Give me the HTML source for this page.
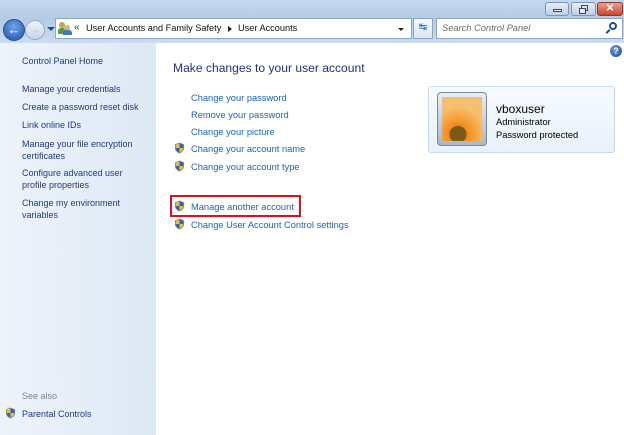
<!DOCTYPE html>
<html><head><meta charset="utf-8"><style>
*{margin:0;padding:0;box-sizing:border-box}
body{width:624px;height:435px;overflow:hidden;position:relative;font-family:"Liberation Sans",sans-serif;font-size:9.3px;background:#fff}
.a{position:absolute;white-space:nowrap}
.top{position:absolute;left:0;top:0;width:624px;height:43px;background:linear-gradient(#c4d8ee,#b3cbe6 45%,#c9dcf0)}
.left{position:absolute;left:0;top:43px;width:156px;height:392px;background:linear-gradient(90deg,#eef3fa,#dde8f5)}
.lk{color:#1e3a8a;font-size:9px}
.ml{color:#1a63c5;font-size:9.3px}
.sh{position:absolute;width:11px;height:12px}
</style></head><body>
<div class="top"></div>
<div class="a" style="left:545px;top:2px;width:24px;height:14px;border:1px solid #7d95b4;border-radius:3px;background:linear-gradient(#e4eef9,#bcd0e8)"><div style="position:absolute;left:7px;top:6px;width:9px;height:3px;border:1px solid #445;background:#fff"></div></div>
<div class="a" style="left:571px;top:2px;width:25px;height:14px;border:1px solid #7d95b4;border-radius:3px;background:linear-gradient(#e4eef9,#bcd0e8)"><div style="position:absolute;left:9px;top:2px;width:7px;height:6px;border:1px solid #445"></div><div style="position:absolute;left:7px;top:5px;width:7px;height:6px;border:1px solid #445;background:#e0eaf6"></div></div>
<div class="a" style="left:597px;top:2px;width:26px;height:14px;border:1px solid #8a3a2e;border-radius:3px;background:linear-gradient(#eaa08f,#c8462f);color:#fff;font-weight:bold;font-size:10px;text-align:center;line-height:12px">✕</div>
<div class="a" style="left:3px;top:19px;width:22px;height:22px;border-radius:50%;background:radial-gradient(circle at 50% 35%,#6fa6ea,#1b4fa8);border:1px solid #274f8f;color:#fff;font-weight:bold;font-size:13px;text-align:center;line-height:19px">←</div>
<div class="a" style="left:25px;top:20px;width:20px;height:20px;border-radius:50%;background:linear-gradient(#eef3f9,#c8d6e6);border:1px solid #9aaec6;color:#bcc9d8;font-size:12px;text-align:center;line-height:17px">→</div>
<div class="a" style="left:47px;top:27px;width:0;height:0;border-left:4px solid transparent;border-right:4px solid transparent;border-top:4px solid #1c4a8c"></div>
<div class="a" style="left:55px;top:18px;width:357px;height:21px;background:#fff;border:1px solid #8ea5c2"></div>
<div class="a" style="left:58px;top:21px;width:14px;height:14px"><div style="position:absolute;left:1px;top:1px;width:6px;height:6px;border-radius:50%;background:#c9a060"></div><div style="position:absolute;left:0;top:7px;width:8px;height:6px;background:#5a9a3a;border-radius:3px 3px 0 0"></div><div style="position:absolute;left:6px;top:4px;width:6px;height:6px;border-radius:50%;background:#d8b080"></div><div style="position:absolute;left:5px;top:9px;width:9px;height:5px;background:#3a7ac8;border-radius:3px 3px 0 0"></div></div>
<div class="a" style="left:74px;top:22px;font-size:10px;color:#333">«</div>
<div class="a" style="left:86px;top:23px;font-size:9.2px;color:#111">User Accounts and Family Safety</div>
<div class="a" style="left:228px;top:26px;width:0;height:0;border-top:3px solid transparent;border-bottom:3px solid transparent;border-left:4px solid #222"></div>
<div class="a" style="left:238px;top:23px;font-size:9.2px;color:#111">User Accounts</div>
<div class="a" style="left:398px;top:28px;width:0;height:0;border-left:3px solid transparent;border-right:3px solid transparent;border-top:3px solid #222"></div>
<div class="a" style="left:413px;top:18px;width:20px;height:21px;border:1px solid #8ea5c2;background:linear-gradient(#f4f8fc,#dae6f3);color:#2a6ac0;font-size:10px;text-align:center;line-height:18px">↹</div>
<div class="a" style="left:436px;top:18px;width:187px;height:21px;background:#fff;border:1px solid #8ea5c2"></div>
<div class="a" style="left:442px;top:23px;font-style:italic;color:#6d6d6d;font-size:9.3px">Search Control Panel</div>
<div class="a" style="left:609px;top:22px;width:8px;height:8px;border:2px solid #1a4fa0;border-radius:50%"></div>
<div class="a" style="left:607px;top:29px;width:2px;height:5px;background:#1a4fa0;transform:rotate(45deg)"></div>
<div class="left"></div>
<div class="a" style="left:610px;top:45px;width:12px;height:12px;border-radius:50%;background:radial-gradient(circle at 40% 35%,#6a9be0,#1b4a9a);color:#fff;font-size:9px;font-weight:bold;text-align:center;line-height:12px">?</div>
<div class="a lk" style="left:22px;top:56px">Control Panel Home</div>
<div class="a lk" style="left:22px;top:84px">Manage your credentials</div>
<div class="a lk" style="left:22px;top:102px">Create a password reset disk</div>
<div class="a lk" style="left:22px;top:120px">Link online IDs</div>
<div class="a lk" style="left:22px;top:138px;line-height:12px">Manage your file encryption<br>certificates</div>
<div class="a lk" style="left:22px;top:167px;line-height:12px">Configure advanced user<br>profile properties</div>
<div class="a lk" style="left:22px;top:197px;line-height:12px">Change my environment<br>variables</div>
<div class="a" style="left:22px;top:391px;color:#7a8696;font-size:9px">See also</div>
<div class="a lk" style="left:22px;top:409px">Parental Controls</div>
<div class="a" style="left:173px;top:61px;font-size:12.1px;color:#1e3287">Make changes to your user account</div>
<div class="a ml" style="left:191px;top:93px">Change your password</div>
<div class="a ml" style="left:191px;top:110px">Remove your password</div>
<div class="a ml" style="left:191px;top:127px">Change your picture</div>
<div class="a ml" style="left:191px;top:144px">Change your account name</div>
<div class="a ml" style="left:191px;top:162px">Change your account type</div>
<div class="a ml" style="left:191px;top:202px">Manage another account</div>
<div class="a ml" style="left:191px;top:220px">Change User Account Control settings</div>
<div class="a" style="left:170px;top:195px;width:131px;height:22px;border:2px solid #e0111d"></div>
<svg width="0" height="0" style="position:absolute"><defs><symbol id="s" viewBox="0 0 12 13"><path d="M6 0.5 L11 2.5 V6.5 C11 9.5 8.5 11.5 6 12.5 C3.5 11.5 1 9.5 1 6.5 V2.5 Z" fill="#7b8796"/><path d="M6 1.5 V6.5 H10 V2.9 Z" fill="#2a62c8"/><path d="M6 1.5 V6.5 H2 V2.9 Z" fill="#f1c21b"/><path d="M6 6.5 V11.5 C4 10.6 2.2 9 2 6.5 Z" fill="#2a62c8"/><path d="M6 6.5 V11.5 C8 10.6 9.8 9 10 6.5 Z" fill="#f1c21b"/></symbol></defs></svg>
<svg class="sh" style="left:174px;top:142px"><use href="#s"/></svg>
<svg class="sh" style="left:174px;top:160px"><use href="#s"/></svg>
<svg class="sh" style="left:174px;top:200px"><use href="#s"/></svg>
<svg class="sh" style="left:174px;top:218px"><use href="#s"/></svg>
<svg class="sh" style="left:5px;top:407px"><use href="#s"/></svg>
<div class="a" style="left:428px;top:86px;width:187px;height:67px;border:1px solid #c5d9ee;border-radius:3px;background:linear-gradient(#f7fbff,#e8f1fb)"></div>
<div class="a" style="left:437px;top:92px;width:50px;height:54px;border:1px solid #7a8a9a;border-radius:4px;background:linear-gradient(#e8eef4,#a9b8c6);padding:4px">
<div style="width:100%;height:100%;background:radial-gradient(circle at 40% 85%,#7a5a18 0 8px,#f08a1a 9px,#f7a540 18px,#f4c070 28px);"></div></div>
<div class="a" style="left:496px;top:102px;font-size:12px;color:#000">vboxuser</div>
<div class="a" style="left:496px;top:117px;color:#000">Administrator</div>
<div class="a" style="left:496px;top:130px;color:#000">Password protected</div>
</body></html>
